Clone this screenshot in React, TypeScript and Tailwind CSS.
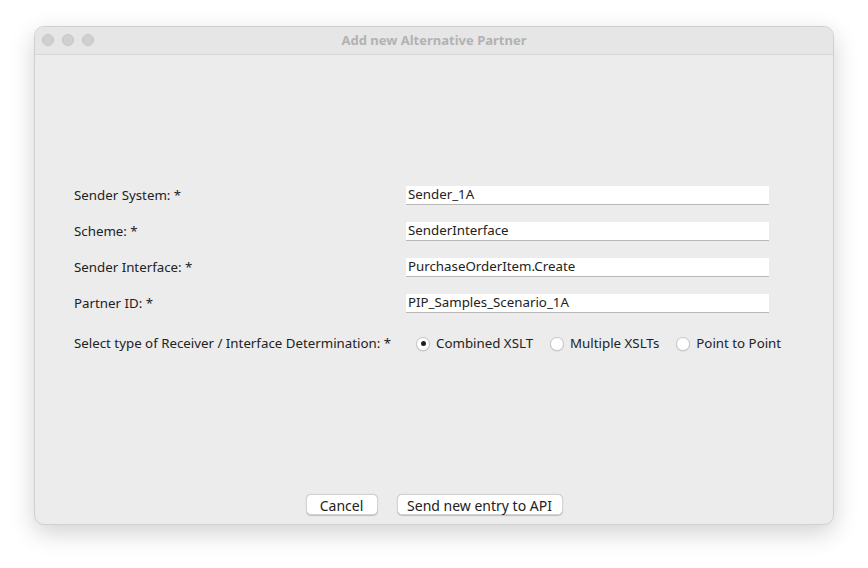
const fields = [
  { label: "Sender System: *", value: "Sender_1A" },
  { label: "Scheme: *", value: "SenderInterface" },
  { label: "Sender Interface: *", value: "PurchaseOrderItem.Create" },
  { label: "Partner ID: *", value: "PIP_Samples_Scenario_1A" },
];

const options = ["Combined XSLT", "Multiple XSLTs", "Point to Point"];

export default function App() {
  return (
    <div className="h-[568px] w-[868px] bg-white pl-[34px] pt-[26px] font-['Noto_Sans',sans-serif] text-[13.3px] text-[#222]">
      <div className="flex h-[499px] w-[800px] flex-col overflow-hidden rounded-[10px] border border-[#d0d0d0] bg-[#ececec] shadow-[0_8px_24px_rgba(0,0,0,0.18)]">
        <TitleBar />
        <div className="flex flex-1 flex-col">
          <div className="grid grid-cols-[332px_363px] gap-y-[17px] pl-[39px] pt-[131px]">
            {fields.map((f) => (
              <Row key={f.label} label={f.label} value={f.value} />
            ))}
          </div>
          <div className="mt-[21px] flex h-[19px] items-center pl-[39px]">
            <span className="w-[342px] whitespace-nowrap">
              Select type of Receiver / Interface Determination: *
            </span>
            <div className="flex items-center">
              {options.map((o, i) => (
                <Radio key={o} label={o} checked={i === 0} />
              ))}
            </div>
          </div>
          <div className="mt-auto flex justify-center gap-[19px] pb-[9px]">
            <Button className="w-[72px]">Cancel</Button>
            <Button className="w-[166px]">Send new entry to API</Button>
          </div>
        </div>
      </div>
    </div>
  );
}

function TitleBar() {
  return (
    <div className="relative flex h-[28px] shrink-0 items-center justify-center border-b border-[#d6d6d6] bg-[#e6e6e6]">
      <div className="absolute left-[7px] top-[7px] flex gap-[8px]">
        <span className="size-[12px] rounded-full border border-[#c4c4c4] bg-[#d0d0d0]" />
        <span className="size-[12px] rounded-full border border-[#c4c4c4] bg-[#d0d0d0]" />
        <span className="size-[12px] rounded-full border border-[#c4c4c4] bg-[#d0d0d0]" />
      </div>
      <span className="text-[13px] font-bold text-[#b2b2b2]">
        Add new Alternative Partner
      </span>
    </div>
  );
}

function Row({ label, value }: { label: string; value: string }) {
  return (
    <>
      <span className="flex h-[19px] items-center">{label}</span>
      <div className="flex h-[19px] items-center border-b border-[#b8b8b8] bg-white pl-[2px]">
        {value}
      </div>
    </>
  );
}

function Radio({ label, checked }: { label: string; checked?: boolean }) {
  return (
    <div className="mr-[17px] flex items-center gap-[6px]">
      <span className="flex size-[14px] items-center justify-center rounded-full border border-[#c8c8c8] bg-white shadow-[0_0.5px_1px_rgba(0,0,0,0.15)]">
        {checked ? <span className="size-[5px] rounded-full bg-[#222]" /> : null}
      </span>
      <span>{label}</span>
    </div>
  );
}

function Button({
  className,
  children,
}: {
  className: string;
  children: React.ReactNode;
}) {
  return (
    <button
      className={`h-[21px] rounded-[5px] border border-[#d2d2d2] bg-white text-center text-[14px] text-[#222] shadow-[0_0.5px_1px_rgba(0,0,0,0.2)] ${className}`}
    >
      {children}
    </button>
  );
}
